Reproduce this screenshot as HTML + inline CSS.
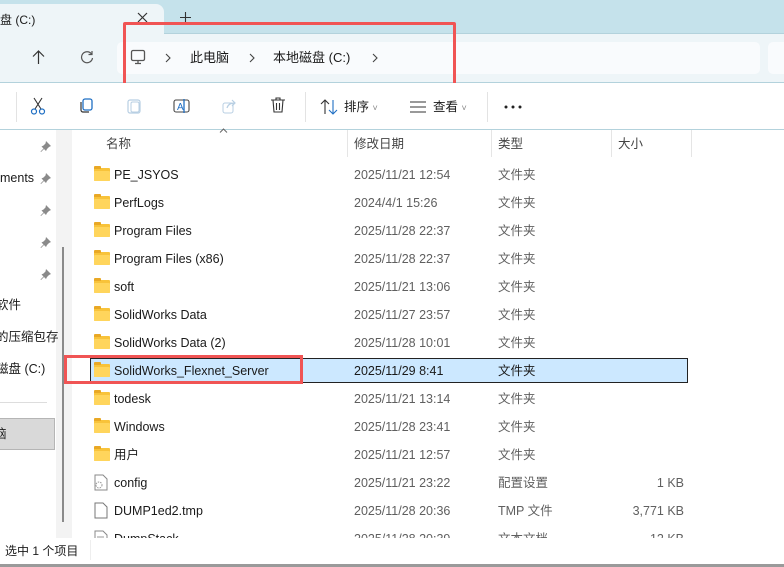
<!DOCTYPE html>
<html><head><meta charset="utf-8"><style>
*{margin:0;padding:0;box-sizing:border-box}
body{width:784px;height:567px;overflow:hidden;background:#fff;font-family:"Liberation Sans","Noto Sans CJK SC",sans-serif;font-size:12.5px;line-height:16px;color:#1a1a1a;position:relative}
.a{position:absolute;white-space:nowrap}
.row{position:absolute;left:72px;width:712px;height:28px}
.row div{line-height:16px}
.row .n{position:absolute;left:42px;top:6px}
.row .d{position:absolute;left:282px;top:6px;color:#5f5f5f}
.row .t{position:absolute;left:426px;top:6px;color:#5f5f5f}
.row .s{position:absolute;right:100px;top:6px;color:#5f5f5f}
.fold{position:absolute;left:22px;top:7px;width:16px;height:13px;background:#f8c33a;border-radius:1px}
.fold:before{content:"";position:absolute;left:0;top:-2px;width:7px;height:3px;background:#e9a825;border-radius:1px 1px 0 0}
.fold:after{content:"";position:absolute;left:0;top:3px;width:16px;height:10px;background:#ffd55c;border-radius:1px}
.pin{position:absolute;left:40px}
.chev{position:absolute;font-size:15px;color:#444;top:49px}
</style></head><body>
<!-- tab bar -->
<div class="a" style="left:0;top:0;width:784px;height:34px;background:#c5e2eb;border-bottom:1px solid #b3d2dc"></div>
<div class="a" style="left:0;top:4px;width:164px;height:31px;background:#eef5f8;border-radius:0 8px 0 0"></div>
<div class="a" style="left:0;top:12px;font-size:12px">盘 (C:)</div>
<svg class="a" style="left:137px;top:12px" width="11" height="11"><path d="M1 1l9 9M10 1l-9 9" stroke="#333" stroke-width="1.2"/></svg>
<svg class="a" style="left:180px;top:12px" width="11" height="11"><path d="M5.5 0v11M0 5.5h11" stroke="#333" stroke-width="1.1"/></svg>
<!-- nav -->
<div class="a" style="left:0;top:34px;width:784px;height:49px;background:#eef5f8;border-bottom:1px solid #b3d2dc"></div>
<svg class="a" style="left:32px;top:50px" width="13" height="14"><path d="M6.5 1v13M1 6.5l5.5-5.5 5.5 5.5" fill="none" stroke="#333" stroke-width="1.2"/></svg>
<svg class="a" style="left:80px;top:50px" width="14" height="14"><path d="M11.5 4A5.5 5.5 0 1 0 12.5 8" fill="none" stroke="#555" stroke-width="1.2"/><path d="M12 1v3.5H8.5" fill="none" stroke="#555" stroke-width="1.2"/></svg>
<div class="a" style="left:117px;top:42px;width:643px;height:32px;background:#f9fbfd;border-radius:5px"></div>
<div class="a" style="left:768px;top:42px;width:30px;height:32px;background:#f9fbfd;border-radius:5px"></div>
<svg class="a" style="left:130px;top:49px" width="16" height="16" viewBox="0 0 16 16"><rect x="1.5" y="1.5" width="13" height="10" rx="1.5" fill="none" stroke="#555" stroke-width="1.3"/><path d="M5 14.5h6M8 11.5v3" stroke="#555" stroke-width="1.3"/></svg>
<svg class="a" style="left:165px;top:53px" width="6" height="10"><path d="M1 1l4 4-4 4" fill="none" stroke="#444" stroke-width="1.1"/></svg>
<div class="a" style="left:190px;top:50px;font-size:13px">此电脑</div>
<svg class="a" style="left:249px;top:53px" width="6" height="10"><path d="M1 1l4 4-4 4" fill="none" stroke="#444" stroke-width="1.1"/></svg>
<div class="a" style="left:273px;top:50px;font-size:13px">本地磁盘 (C:)</div>
<svg class="a" style="left:372px;top:53px" width="6" height="10"><path d="M1 1l4 4-4 4" fill="none" stroke="#444" stroke-width="1.1"/></svg>
<div class="a" style="left:123px;top:22px;width:333px;height:69px;border:3px solid #f05454;border-radius:2px"></div>
<!-- toolbar -->
<div class="a" style="left:0;top:83px;width:784px;height:47px;background:#fff;border-bottom:1px solid #b3d2dc"></div>
<div class="a" style="left:16px;top:92px;width:1px;height:30px;background:#e3e3e3"></div>
<svg class="a" style="left:30px;top:97px" width="16" height="18"><path d="M4 1l7 11M12 1L5 12" stroke="#333" stroke-width="1.1" fill="none"/><circle cx="4" cy="14.5" r="2.5" fill="none" stroke="#1f6fc4" stroke-width="1.2"/><circle cx="12" cy="14.5" r="2.5" fill="none" stroke="#1f6fc4" stroke-width="1.2"/></svg>
<svg class="a" style="left:78px;top:98px" width="16" height="16"><rect x="5" y="1" width="9" height="11" rx="2" fill="none" stroke="#1f6fc4" stroke-width="1.3"/><path d="M3 4v8a2 2 0 0 0 2 2h6" fill="none" stroke="#333" stroke-width="1.2"/></svg>
<svg class="a" style="left:126px;top:98px" width="16" height="16"><rect x="2" y="2" width="12" height="13" rx="2" fill="none" stroke="#b8cfe3" stroke-width="1.2"/><rect x="5" y="4" width="8" height="10" rx="1.5" fill="none" stroke="#b8cfe3"/></svg>
<svg class="a" style="left:173px;top:98px" width="18" height="16"><rect x="1" y="2" width="15" height="12" rx="2" fill="none" stroke="#444" stroke-width="1.1"/><text x="4" y="12" font-size="10" fill="#1f6fc4" font-family="Liberation Sans">A</text><path d="M11 1v14" stroke="#1f6fc4" stroke-width="1.3"/></svg>
<svg class="a" style="left:222px;top:98px" width="16" height="16"><rect x="1" y="5" width="10" height="10" rx="2" fill="none" stroke="#b8cfe3"/><path d="M5 10c1-4 4-5 8-5M10 2l3 3-3 3" fill="none" stroke="#b8cfe3" stroke-width="1.2"/></svg>
<svg class="a" style="left:270px;top:97px" width="16" height="17"><path d="M1 3h14M6 3V1h4v2M3 3l1 12h8l1-12M6.5 6v7M9.5 6v7" fill="none" stroke="#333" stroke-width="1.1"/></svg>
<div class="a" style="left:305px;top:92px;width:1px;height:30px;background:#e3e3e3"></div>
<svg class="a" style="left:320px;top:99px" width="18" height="16"><path d="M5 15V1M1 5l4-4 4 4" fill="none" stroke="#333" stroke-width="1.1"/><path d="M13 1v14M9 11l4 4 4-4" fill="none" stroke="#1f6fc4" stroke-width="1.1"/></svg>
<div class="a" style="left:344px;top:99px">排序 <span style="color:#888;font-size:9px">˅</span></div>
<svg class="a" style="left:410px;top:101px" width="16" height="12"><path d="M0 1h16M0 6h16M0 11h16" stroke="#333" stroke-width="1.1"/></svg>
<div class="a" style="left:433px;top:99px">查看 <span style="color:#888;font-size:9px">˅</span></div>
<div class="a" style="left:487px;top:92px;width:1px;height:30px;background:#e3e3e3"></div>
<svg class="a" style="left:504px;top:105px" width="18" height="4"><circle cx="2" cy="2" r="1.5" fill="#222"/><circle cx="9" cy="2" r="1.5" fill="#222"/><circle cx="16" cy="2" r="1.5" fill="#222"/></svg>
<!-- sidebar -->
<div class="a" style="left:56px;top:130px;width:16px;height:408px;background:#f3f3f3"></div>
<div class="a" style="left:62px;top:247px;width:2px;height:275px;background:#8a8a8a"></div>
<svg width="0" height="0" style="position:absolute"><defs><symbol id="p" viewBox="0 0 12 12"><path d="M6 1l5 5-2 1-2 2-1 2-2-2-3 3-0.5-0.5 3-3-2-2 2-1 2-2z" fill="#8a8a8a"/></symbol></defs></svg>
<svg class="pin" style="top:140px" width="12" height="12"><use href="#p"/></svg>
<div class="a" style="left:0;top:170px">ments</div><svg class="pin" style="top:172px" width="12" height="12"><use href="#p"/></svg>
<svg class="pin" style="top:204px" width="12" height="12"><use href="#p"/></svg>
<svg class="pin" style="top:236px" width="12" height="12"><use href="#p"/></svg>
<svg class="pin" style="top:268px" width="12" height="12"><use href="#p"/></svg>
<div class="a" style="left:-4px;top:297px">软件</div>
<div class="a" style="left:-4px;top:329px">的压缩包存</div>
<div class="a" style="left:-4px;top:361px">磁盘 (C:)</div>
<div class="a" style="left:0;top:402px;width:47px;height:1px;background:#ddd"></div>
<div class="a" style="left:-2px;top:418px;width:57px;height:32px;background:#d9d9d9;border:1px solid #b5b5b5"></div>
<div class="a" style="left:-6px;top:426px">脑</div>
<!-- header -->
<svg class="a" style="left:219px;top:128px" width="9" height="5"><path d="M1 4.5l3.5-3.5 3.5 3.5" fill="none" stroke="#666"/></svg>
<div class="a" style="left:106px;top:136px;color:#444">名称</div>
<div class="a" style="left:347px;top:130px;width:1px;height:27px;background:#e5e5e5"></div>
<div class="a" style="left:354px;top:136px;color:#444">修改日期</div>
<div class="a" style="left:491px;top:130px;width:1px;height:27px;background:#e5e5e5"></div>
<div class="a" style="left:498px;top:136px;color:#444">类型</div>
<div class="a" style="left:611px;top:130px;width:1px;height:27px;background:#e5e5e5"></div>
<div class="a" style="left:618px;top:136px;color:#444">大小</div>
<div class="a" style="left:691px;top:130px;width:1px;height:27px;background:#e5e5e5"></div>
<!-- rows -->
<div class="a" style="left:72px;top:160px;width:712px;height:378px;overflow:hidden">
<div style="position:relative;left:-72px;top:-160px">
<div class="row" style="top:161px"><div class="fold"></div><div class="n">PE_JSYOS</div><div class="d">2025/11/21 12:54</div><div class="t">文件夹</div></div>
<div class="row" style="top:189px"><div class="fold"></div><div class="n">PerfLogs</div><div class="d">2024/4/1 15:26</div><div class="t">文件夹</div></div>
<div class="row" style="top:217px"><div class="fold"></div><div class="n">Program Files</div><div class="d">2025/11/28 22:37</div><div class="t">文件夹</div></div>
<div class="row" style="top:245px"><div class="fold"></div><div class="n">Program Files (x86)</div><div class="d">2025/11/28 22:37</div><div class="t">文件夹</div></div>
<div class="row" style="top:273px"><div class="fold"></div><div class="n">soft</div><div class="d">2025/11/21 13:06</div><div class="t">文件夹</div></div>
<div class="row" style="top:301px"><div class="fold"></div><div class="n">SolidWorks Data</div><div class="d">2025/11/27 23:57</div><div class="t">文件夹</div></div>
<div class="row" style="top:329px"><div class="fold"></div><div class="n">SolidWorks Data (2)</div><div class="d">2025/11/28 10:01</div><div class="t">文件夹</div></div>
<div class="a" style="left:90px;top:358px;width:598px;height:25px;background:#cce8ff;border:1px solid #222"></div>
<div class="row" style="top:357px"><div class="fold"></div><div class="n">SolidWorks_Flexnet_Server</div><div class="d" style="color:#1a1a1a">2025/11/29 8:41</div><div class="t" style="color:#1a1a1a">文件夹</div></div>
<div class="row" style="top:385px"><div class="fold"></div><div class="n">todesk</div><div class="d">2025/11/21 13:14</div><div class="t">文件夹</div></div>
<div class="row" style="top:413px"><div class="fold"></div><div class="n">Windows</div><div class="d">2025/11/28 23:41</div><div class="t">文件夹</div></div>
<div class="row" style="top:441px"><div class="fold"></div><div class="n">用户</div><div class="d">2025/11/21 12:57</div><div class="t">文件夹</div></div>
<div class="row" style="top:469px"><svg style="position:absolute;left:22px;top:5px" width="14" height="17"><path d="M1 1h8l4 4v11H1z" fill="#fff" stroke="#888"/><circle cx="5" cy="11" r="3" fill="none" stroke="#999" stroke-dasharray="1.5 1"/></svg><div class="n">config</div><div class="d">2025/11/21 23:22</div><div class="t">配置设置</div><div class="s">1 KB</div></div>
<div class="row" style="top:497px"><svg style="position:absolute;left:22px;top:5px" width="14" height="17"><path d="M1 1h8l4 4v11H1z" fill="#fff" stroke="#777"/></svg><div class="n">DUMP1ed2.tmp</div><div class="d">2025/11/28 20:36</div><div class="t">TMP 文件</div><div class="s">3,771 KB</div></div>
<div class="row" style="top:525px"><svg style="position:absolute;left:22px;top:5px" width="14" height="17"><path d="M1 1h8l4 4v11H1z" fill="#fff" stroke="#888"/><path d="M3 7h7M3 9h7M3 11h7" stroke="#999"/></svg><div class="n">DumpStack</div><div class="d">2025/11/28 20:39</div><div class="t">文本文档</div><div class="s">12 KB</div></div>
</div></div>
<div class="a" style="left:64px;top:355px;width:239px;height:29px;border:3px solid #f05454"></div>
<!-- status -->
<div class="a" style="left:5px;top:543px;font-size:12px">选中 1 个项目</div>
<div class="a" style="left:90px;top:540px;width:1px;height:20px;background:#eee"></div>
<div class="a" style="left:0;top:564px;width:784px;height:3px;background:#9a9a9a"></div>
</body></html>
